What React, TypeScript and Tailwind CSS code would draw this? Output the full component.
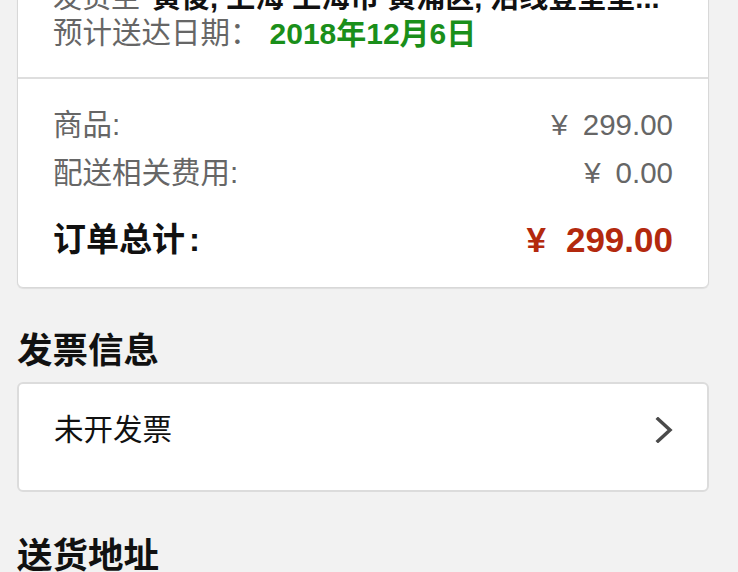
const font = { fontFamily: '"Liberation Sans", "Noto Sans CJK SC", sans-serif' };

function Chevron() {
  return (
    <svg width="18" height="26" viewBox="0 0 18 26" fill="none" aria-hidden="true">
      <polyline points="3,2 15,13 3,24" stroke="#4a4a4a" strokeWidth="3.5" strokeLinecap="square" />
    </svg>
  );
}

export default function App() {
  return (
    <div className="min-h-screen overflow-hidden bg-[#f2f2f2] pl-[17px] pr-[29px]" style={font}>
      {/* Order summary card */}
      <div className="-mt-[39px] rounded-[6px] border border-[#d8d8d8] bg-white shadow-[0_1px_1px_rgba(0,0,0,0.08)]">
        <div className="px-[35px] pt-[20px] pb-[27px]">
          <div className="flex h-[34px] items-center overflow-hidden whitespace-nowrap text-[29px]">
            <span className="text-[#666]">发货至</span>
            <span className="ml-[12px] truncate font-bold text-[#111]">黄俊, 上海 上海市 黄浦区, 沿线登室室...</span>
          </div>
          <div className="flex h-[34px] items-center">
            <span className="text-[29.5px] text-[#666]">预计送达日期：</span>
            <span className="ml-[10px] text-[30px] font-bold text-[#1a8f1a]">2018年12月6日</span>
          </div>
        </div>
        <div className="h-[2px] bg-[#dedede]" />
        <div className="px-[35px] pt-[22px] pb-[23px]">
          <div className="flex h-[48px] items-center justify-between text-[29.5px] text-[#666]">
            <span>商品:</span>
            <span>
              ¥<span className="ml-[15px]">299.00</span>
            </span>
          </div>
          <div className="flex h-[48px] items-center justify-between text-[29.5px] text-[#666]">
            <span>配送相关费用:</span>
            <span>
              ¥<span className="ml-[15px]">0.00</span>
            </span>
          </div>
          <div className="mt-[19px] flex h-[48px] items-center justify-between font-bold">
            <span className="text-[33px] text-[#111]">
              订单总计<span className="ml-[4px]">:</span>
            </span>
            <span className="text-[35px] text-[#b3290e]">
              ¥<span className="ml-[20px]">299.00</span>
            </span>
          </div>
        </div>
      </div>

      {/* Invoice */}
      <h2 className="mt-[40px] mb-[6px] flex h-[48px] items-center text-[35.5px] font-bold text-[#111]">发票信息</h2>
      <div className="flex h-[110px] items-start justify-between rounded-[6px] border-2 border-[#dcdcdc] bg-white px-[35px] pt-[26px]">
        <span className="flex h-[40px] items-center text-[29.5px] text-[#111]">未开发票</span>
        <span className="mt-[7px] mr-[-1px]">
          <Chevron />
        </span>
      </div>

      {/* Shipping address */}
      <h2 className="mt-[41px] flex h-[48px] items-center text-[35.5px] font-bold text-[#111]">送货地址</h2>
    </div>
  );
}
